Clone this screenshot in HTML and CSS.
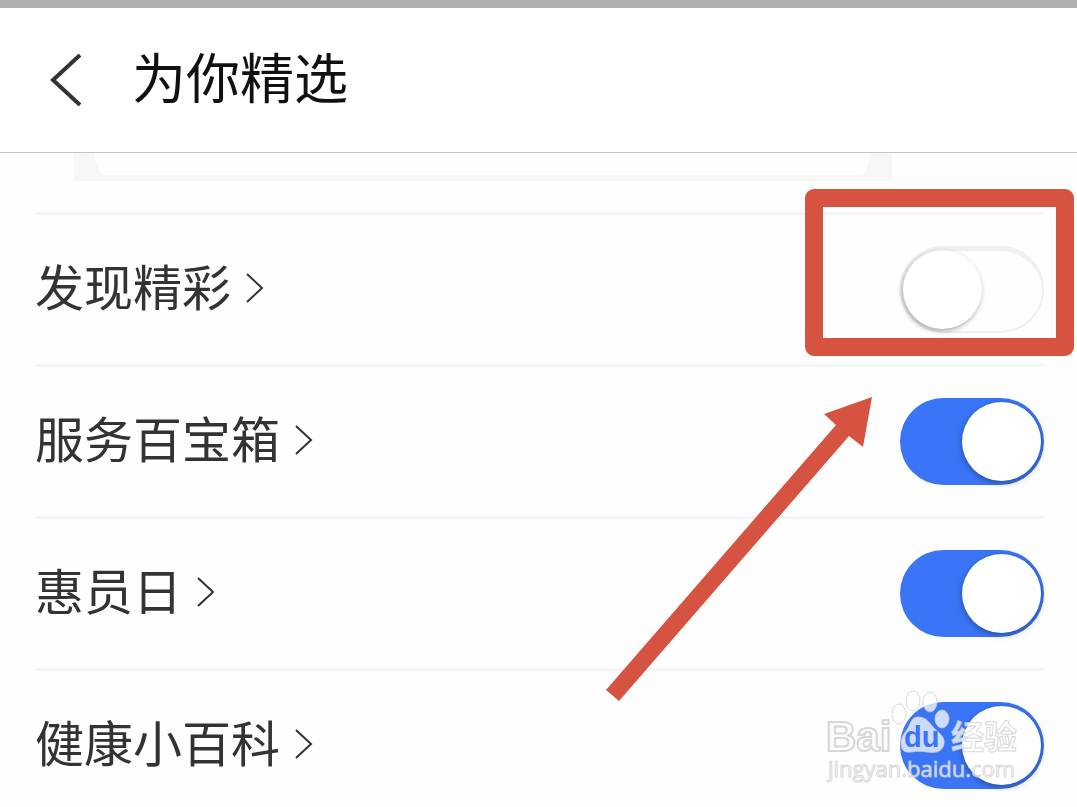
FILE: index.html
```html
<!DOCTYPE html>
<html lang="zh-CN">
<head>
  <meta charset="UTF-8" />
  <meta name="viewport" content="width=device-width, initial-scale=1" />
  <title>为你精选</title>
  <link rel="stylesheet" href="styles.css">
</head>
<body>
  <header class="header">
    <button class="back" type="button" aria-label="返回">
      <svg width="32" height="52" viewBox="0 0 32 52"><path d="M30 1L3 26L30 51" /></svg>
    </button>
    <h1>为你精选</h1>
  </header>

  <main class="content">
    <div class="card-edge">
      <svg class="corner" width="30" height="22" viewBox="0 0 30 22"><path d="M0 0H20Q22 17 30 22H0Z" /></svg>
      <svg class="corner" width="30" height="22" viewBox="0 0 30 22"><path d="M30 0H8Q7 17 0 22H30Z" /></svg>
    </div>

    <div class="list">
      <div class="row">
        <label for="discover"><span>发现精彩</span>
          <svg class="arrow" width="18" height="30" viewBox="0 0 18 30"><path d="M1 1L16 15L1 29" /></svg>
        </label>
        <input class="switch" type="checkbox" id="discover">
      </div>
      <div class="row">
        <label for="service"><span>服务百宝箱</span>
          <svg class="arrow" width="18" height="30" viewBox="0 0 18 30"><path d="M1 1L16 15L1 29" /></svg>
        </label>
        <input class="switch" type="checkbox" id="service" checked>
      </div>
      <div class="row">
        <label for="member"><span>惠员日</span>
          <svg class="arrow" width="18" height="30" viewBox="0 0 18 30"><path d="M1 1L16 15L1 29" /></svg>
        </label>
        <input class="switch" type="checkbox" id="member" checked>
      </div>
      <div class="row">
        <label for="health"><span>健康小百科</span>
          <svg class="arrow" width="18" height="30" viewBox="0 0 18 30"><path d="M1 1L16 15L1 29" /></svg>
        </label>
        <input class="switch" type="checkbox" id="health" checked>
      </div>
    </div>

    <!-- highlight and pointer over the first switch -->
    <div class="highlight"></div>
    <svg class="pointer" width="266" height="305" viewBox="0 0 266 305">
      <path d="M266 0L218 17L230 28L0 293L13 304L243 39L257 50Z" />
    </svg>

    <!-- watermark -->
    <svg class="watermark" width="204" height="100" viewBox="0 0 204 100">
      <text class="wm-logo" x="6" y="61">Bai</text>
      <ellipse cx="79" cy="24" rx="7" ry="10" />
      <ellipse cx="93" cy="11" rx="7" ry="10" />
      <ellipse cx="110" cy="12" rx="7" ry="10" />
      <ellipse cx="122" cy="29" rx="7" ry="9" />
      <path d="M98 27C108 27 110 35 116 40C122 45 125 49 124 54C122 63 114 63 107 62C101 61 97 61 91 62C84 63 81 60 81 53C81 46 85 43 88 38C91 32 92 27 98 27Z" />
      <text class="wm-du" x="84" y="57">du</text>
      <text class="wm-cn" x="131" y="59">经验</text>
      <text class="wm-url" x="8" y="87">jingyan.baidu.com</text>
    </svg>
  </main>
</body>
</html>
```
FILE: styles.css
```css
body {
  font-family: "Noto Sans CJK SC", sans-serif;
  margin: 0;
  height: 100vh;
  box-sizing: border-box;
  border-top: 8px solid #afafaf;
  background: #fefefe;
  color: #333;
  overflow: hidden;
}

.header {
  display: flex;
  align-items: center;
  gap: 50px;
  height: 144px;
  padding: 0 50px;
  background: #fff;
  border-bottom: 1px solid #c4c4c4;
}

.header h1 {
  margin: 0;
  padding-bottom: 8px;
  font-size: 54px;
  font-weight: 400;
  line-height: 80px;
  color: #111;
}

.back {
  display: flex;
  padding: 0;
  border: 0;
  background: none;
}

.back path {
  fill: none;
  stroke: #333;
  stroke-width: 4;
}

.content {
  position: relative;
}

/* bottom edge of the preview card that is scrolled under the header */
.card-edge {
  display: flex;
  justify-content: space-between;
  height: 22px;
  margin: 0 185px 31px 74px;
  border-bottom: 6px solid #f7f7f7;
}

.corner {
  fill: #f7f7f7;
}

.list {
  padding: 0 33px 0 35px;
}

.row {
  display: flex;
  justify-content: space-between;
  align-items: center;
  height: 149px;
  border-top: 3px solid #f5f5f5;
}

.row label {
  display: flex;
  align-items: center;
  gap: 15px;
  padding-bottom: 4px;
  font-size: 49px;
  line-height: 72px;
}

.row label span {
  padding-bottom: 6px;
}

.arrow path {
  fill: none;
  stroke: #333;
  stroke-width: 2;
}

.switch {
  appearance: none;
  display: flex;
  align-items: center;
  box-sizing: border-box;
  width: 144px;
  height: 87px;
  margin: 0;
  padding: 0 3px;
  border-radius: 44px;
  background: #fefefe;
  box-shadow: inset 0 0 0 2px #f0f0f0, inset 0 4px 0 1px #f0f0f0;
}

.switch::before {
  content: "";
  width: 79px;
  height: 79px;
  border-radius: 50%;
  background: #fff;
  box-shadow: -1px 2px 5px rgba(0, 0, 0, 0.35);
}

.switch:checked {
  justify-content: flex-end;
  background: #3975f6;
  box-shadow: none;
}

.switch:checked::before {
  box-shadow: 0 2px 6px rgba(0, 0, 0, 0.35);
}

.highlight {
  position: absolute;
  top: 36px;
  right: 3px;
  box-sizing: border-box;
  width: 269px;
  height: 167px;
  border: 18px solid #d65341;
  border-radius: 9px;
  pointer-events: none;
}

.pointer {
  position: absolute;
  top: 244px;
  right: 205px;
  fill: #d65341;
  pointer-events: none;
}

.watermark {
  position: absolute;
  top: 537px;
  right: 53px;
  fill: rgba(255, 255, 255, 0.75);
  stroke: rgba(205, 205, 205, 0.8);
  stroke-width: 1;
  pointer-events: none;
}

.wm-logo {
  font: bold 42px "Liberation Sans", sans-serif;
  stroke-width: 2;
}

.wm-du {
  font: bold 29px "Liberation Sans", sans-serif;
  fill: #3975f6;
  stroke: none;
}

.wm-cn {
  font: bold 33px "Noto Sans CJK SC", sans-serif;
}

.wm-url {
  font: 22px "Open Sans", sans-serif;
}
```
